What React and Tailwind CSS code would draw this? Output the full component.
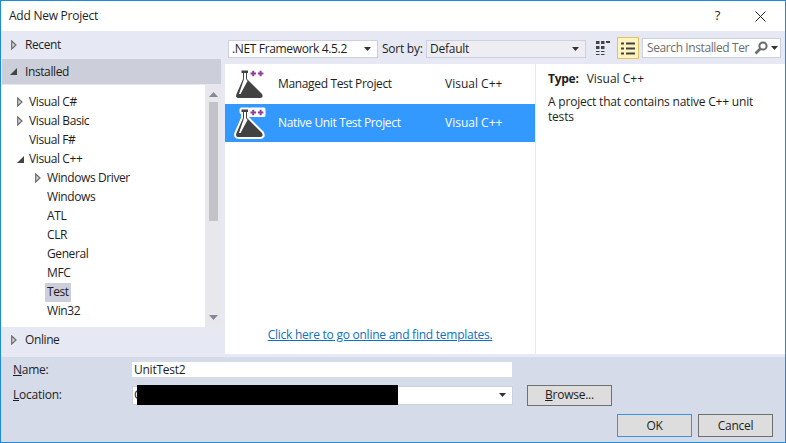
const treeItems = [
  { label: "Visual C#", indent: "pl-[28px]", arrow: "hollow", x: "ml-[16px]" },
  { label: "Visual Basic", indent: "pl-[28px]", arrow: "hollow", x: "ml-[16px]" },
  { label: "Visual F#", indent: "pl-[28px]" },
  { label: "Visual C++", indent: "pl-[28px]", arrow: "solid", x: "ml-[16px]" },
  { label: "Windows Driver", indent: "pl-[46px]", arrow: "hollow", x: "ml-[34px]" },
  { label: "Windows", indent: "pl-[46px]" },
  { label: "ATL", indent: "pl-[46px]" },
  { label: "CLR", indent: "pl-[46px]" },
  { label: "General", indent: "pl-[46px]" },
  { label: "MFC", indent: "pl-[46px]" },
  { label: "Test", indent: "pl-[46px]", selected: true },
  { label: "Win32", indent: "pl-[46px]" },
];

function Hollow({ className }) {
  return (
    <svg width="6" height="10" viewBox="0 0 6 10" className={className}>
      <path d="M0.7 1 L5 5 L0.7 9 Z" fill="#d4d4d8" stroke="#6d6d6d" strokeWidth="1.2" />
    </svg>
  );
}

function Solid({ className }) {
  return (
    <svg width="7" height="7" viewBox="0 0 7 7" className={className}>
      <path d="M7 0 V7 H0 Z" fill="#444" />
    </svg>
  );
}

function Caret({ className }) {
  return (
    <svg width="7" height="4" viewBox="0 0 7 4" className={className}>
      <path d="M0 0 H7 L3.5 4 Z" fill="#333" />
    </svg>
  );
}

function Flask({ selected }) {
  const flask = "M8.5 5.5 H15 V8 H14 V14 L29 29 Q31 33 27 33 H6 Q2 33 3.5 29 L10 14 V8 H8.5 Z";
  return (
    <svg width="36" height="38" viewBox="0 0 36 38">
      {selected && (
        <>
          <path d={flask} fill="#fff" stroke="#fff" strokeWidth="4" strokeLinejoin="round" />
          <rect x="15.5" y="3.5" width="17" height="9.5" rx="1.5" fill="#fff" />
        </>
      )}
      <path d={flask} fill="#424242" />
      <path d="M11 8 H13 V14 L14.5 16 L7.5 29 H6 L11 14 Z" fill="#fff" />
      <path d="M17.5 8.5 H23 M20.2 5.7 V11.3 M24.8 8.5 H30.4 M27.6 5.7 V11.3" stroke="#913f97" strokeWidth="2" fill="none" />
    </svg>
  );
}

function ProjectRow({ name, selected }) {
  return (
    <div className={`flex items-center ${selected ? "h-[38px] bg-[#3399ff] text-white" : "h-[39px] text-[#1e1e1e]"}`}>
      <div className="ml-[8px] w-[45px]">
        <Flask selected={selected} />
      </div>
      <span className="w-[167px] tracking-[-0.35px]">{name}</span>
      <span className="tracking-normal">Visual C++</span>
    </div>
  );
}

export default function App() {
  return (
    <div
      className="flex h-[443px] w-[786px] flex-col overflow-hidden border border-[#1b8ae0] bg-white text-[12px] tracking-[-0.25px] text-[#1e1e1e]"
      style={{ fontFamily: '"Open Sans", sans-serif' }}
    >
      {/* title bar */}
      <div className="flex h-[30px] shrink-0 items-center bg-white pl-[8px] pr-[19px]">
        <span>Add New Project</span>
        <span className="ml-auto mr-[35px] text-[13px]">?</span>
        <svg width="11" height="11" viewBox="0 0 11 11">
          <path d="M0.5 0.5 L10.5 10.5 M10.5 0.5 L0.5 10.5" stroke="#222" strokeWidth="1" />
        </svg>
      </div>

      <div className="flex h-[326px] shrink-0 bg-[#e6e9f4]">
        {/* left panel */}
        <div className="flex w-[224px] shrink-0 flex-col tracking-[-0.4px]">
          <div className="flex h-[28px] items-center pl-[10px]">
            <Hollow className="mr-[8px]" />
            <span>Recent</span>
          </div>
          <div className="ml-px mr-[4px] flex h-[25px] items-center bg-[#ccced9] pl-[8px]">
            <Solid className="mr-[8px]" />
            <span>Installed</span>
          </div>
          <div className="mr-[4px] mt-px flex h-[242px]">
            <div className="flex-1 bg-white pt-[8px]">
              {treeItems.map((item) => (
                <div key={item.label} className={`relative flex h-[19px] items-start ${item.indent}`}>
                  {item.arrow === "hollow" && <Hollow className={`absolute left-0 top-[4px] ${item.x}`} />}
                  {item.arrow === "solid" && <Solid className={`absolute left-0 top-[6px] ${item.x}`} />}
                  <span className={item.selected ? "-ml-[2px] bg-[#cccedb] px-[2px] pb-[2px] leading-[17px]" : "leading-[17px]"}>{item.label}</span>
                </div>
              ))}
            </div>
            <div className="flex w-[16px] flex-col items-center bg-[#e8e8ec]">
              <svg width="9" height="5" viewBox="0 0 9 5" className="mt-[7px]">
                <path d="M0 5 L4.5 0 L9 5 Z" fill="#868999" />
              </svg>
              <div className="mt-[5px] h-[119px] w-[9px] bg-[#c2c3c9]" />
              <svg width="9" height="5" viewBox="0 0 9 5" className="mb-[7px] mt-auto">
                <path d="M0 0 L4.5 5 L9 0 Z" fill="#868999" />
              </svg>
            </div>
          </div>
          <div className="flex h-[25px] items-center pl-[10px]">
            <Hollow className="mr-[8px]" />
            <span>Online</span>
          </div>
        </div>

        {/* center and right */}
        <div className="flex min-w-0 flex-1 flex-col">
          <div className="flex h-[33px] shrink-0 items-start pl-[3px]">
            <div className="mt-[9px] flex h-[18px] w-[150px] items-center border border-[#ccd0e0] bg-white pl-[3px] pr-[6px] tracking-[-0.35px]">
              <span>.NET Framework 4.5.2</span>
              <Caret className="ml-auto" />
            </div>
            <span className="ml-[4px] mt-[9px] w-[44px] leading-[18px]">Sort by:</span>
            <div className="mt-[9px] flex h-[18px] w-[160px] items-center border border-[#ccd0e0] bg-[#eeeef2] pl-[3px] pr-[6px]">
              <span>Default</span>
              <Caret className="ml-auto" />
            </div>
            <svg width="14" height="14" viewBox="0 0 14 14" className="ml-[10px] mt-[10px]" fill="#424242">
              <rect x="0" y="0" width="3.5" height="3" />
              <rect x="5" y="0" width="3.5" height="3" />
              <rect x="10" y="0" width="4" height="2" />
              <rect x="0" y="5" width="3.5" height="3" />
              <rect x="5" y="5" width="3.5" height="3" />
              <rect x="0" y="10" width="3.5" height="1" />
              <rect x="5" y="10" width="3.5" height="1" />
              <rect x="0" y="13" width="3.5" height="1" />
              <rect x="5" y="13" width="3.5" height="1" />
            </svg>
            <div className="ml-[7px] mt-[6px] flex h-[22px] w-[22px] items-center justify-center border border-[#e5c365] bg-[#fdf4bf]">
              <svg width="14" height="13" viewBox="0 0 14 13">
                <path d="M0 1.5 H3 M5 1.5 H14 M0 6.5 H3 M5 6.5 H14 M0 11.5 H3 M5 11.5 H14" stroke="#424242" strokeWidth="2" />
              </svg>
            </div>
            <div className="ml-[3px] mt-[7px] flex h-[20px] w-[139px] items-center border border-[#ccd0e0] bg-white pl-[4px]">
              <span className="w-[107px] whitespace-nowrap tracking-[-0.4px] text-[#6d6d6d]">Search Installed Ter</span>
              <svg width="14" height="14" viewBox="0 0 14 14">
                <circle cx="9" cy="5" r="3.6" fill="none" stroke="#6b6b6b" strokeWidth="2" />
                <path d="M6.5 7.5 L1.5 12.5" stroke="#6b6b6b" strokeWidth="2.6" />
              </svg>
              <Caret className="ml-[3px]" />
            </div>
          </div>

          <div className="flex h-[290px] bg-white">
            <div className="flex w-[311px] shrink-0 flex-col border-r border-[#e6e9f4]">
              <ProjectRow name="Managed Test Project" />
              <div className="h-px" />
              <ProjectRow name="Native Unit Test Project" selected />
              <a className="mb-[10px] mt-auto text-center text-[#0e70c0] underline">Click here to go online and find templates.</a>
            </div>
            <div className="flex-1 pl-[12px] pt-[6px]">
              <div>
                <span className="mr-[8px] font-bold">Type:</span>
                <span className="tracking-normal">Visual C++</span>
              </div>
              <p className="mt-[6px] w-[225px] leading-[15px] tracking-[-0.2px]">A project that contains native C++ unit tests</p>
            </div>
          </div>
        </div>
      </div>

      {/* footer form */}
      <div className="relative flex-1 bg-[#d6dbe9] pl-[12px]">
        <div className="mt-[5px] flex h-[15px] items-center">
          <span className="w-[119px]"><u>N</u>ame:</span>
          <div className="flex h-[15px] w-[380px] items-center bg-white pl-[2px]">UnitTest2</div>
        </div>
        <div className="mt-[7px] flex h-[22px] items-center">
          <span className="w-[119px]"><u>L</u>ocation:</span>
          <div className="flex h-[19px] w-[381px] items-center border border-[#ccd0e0] bg-white pl-[1px] pr-[6px]">
            <span>C</span>
            <Caret className="ml-auto" />
          </div>
          <button className="ml-[14px] h-[21px] w-[85px] border border-[#707070] bg-[#dddddd] text-center"><u>B</u>rowse...</button>
        </div>
        <div className="mt-[8px] flex justify-end gap-[6px] pr-[12px]">
          <button className="h-[23px] w-[75px] border border-[#3c93e6] bg-[#dddddd]">OK</button>
          <button className="h-[23px] w-[75px] border border-[#707070] bg-[#dddddd]">Cancel</button>
        </div>
        {/* redacted bar over the location */}
        <div className="absolute left-[136px] top-[28px] h-[20px] w-[261px] bg-black" />
      </div>
    </div>
  );
}
